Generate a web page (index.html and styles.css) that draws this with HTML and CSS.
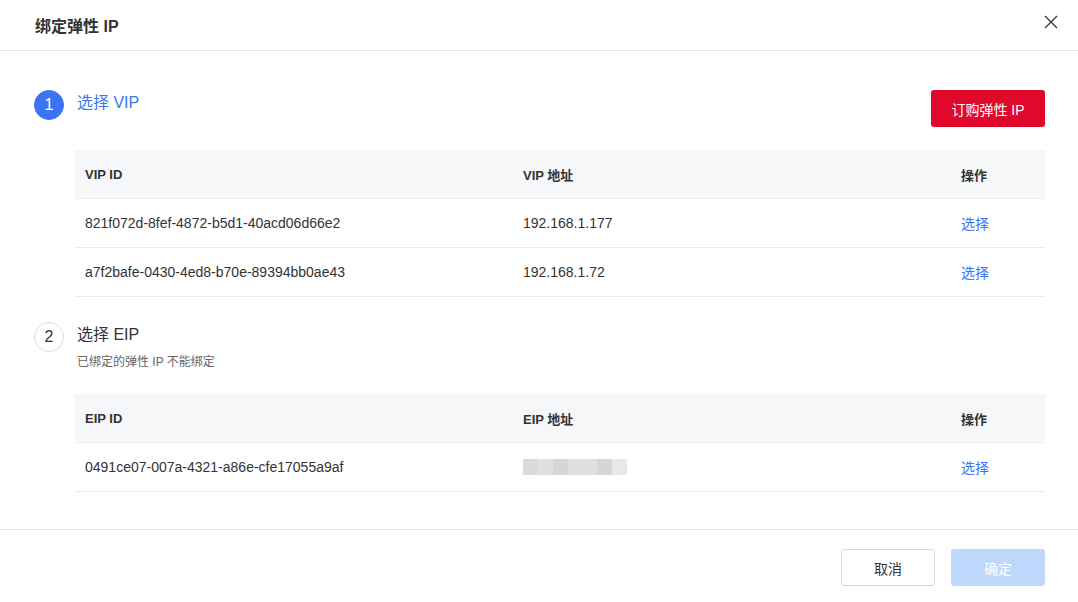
FILE: index.html
```html
<!DOCTYPE html>
<html lang="zh-CN">
<head>
  <meta charset="UTF-8" />
  <title>绑定弹性 IP</title>
  <link rel="stylesheet" href="styles.css">
</head>
<body>
  <div class="dialog">
    <div class="dialog-header">
      <span class="dialog-title">绑定弹性 IP</span>
      <span class="dialog-close">
        <svg width="14" height="14" viewBox="0 0 14 14"><path d="M1 1L13 13M13 1L1 13" stroke="#333" stroke-width="1.3" fill="none"/></svg>
      </span>
    </div>

    <div class="dialog-body">
      <!-- Step 1 -->
      <div class="step">
        <div class="step-head">
          <span class="step-num active">1</span>
          <div class="step-text">
            <div class="step-title active">选择 VIP</div>
          </div>
          <button class="btn btn-red">订购弹性 IP</button>
        </div>
        <table class="grid">
          <thead>
            <tr><th class="c1">VIP ID</th><th class="c2">VIP 地址</th><th class="c3">操作</th></tr>
          </thead>
          <tbody>
            <tr><td>821f072d-8fef-4872-b5d1-40acd06d66e2</td><td>192.168.1.177</td><td><a class="link">选择</a></td></tr>
            <tr><td>a7f2bafe-0430-4ed8-b70e-89394bb0ae43</td><td>192.168.1.72</td><td><a class="link">选择</a></td></tr>
          </tbody>
        </table>
      </div>

      <!-- Step 2 -->
      <div class="step step-two">
        <div class="step-head">
          <span class="step-num">2</span>
          <div class="step-text">
            <div class="step-title">选择 EIP</div>
            <div class="step-desc">已绑定的弹性 IP 不能绑定</div>
          </div>
        </div>
        <table class="grid">
          <thead>
            <tr><th class="c1">EIP ID</th><th class="c2">EIP 地址</th><th class="c3">操作</th></tr>
          </thead>
          <tbody>
            <tr>
              <td>0491ce07-007a-4321-a86e-cfe17055a9af</td>
              <td>
                <div class="blur">
                  <span class="b1"></span><span class="b2"></span><span class="b3"></span><span class="b2"></span><span class="b2"></span><span class="b3"></span><span class="b4"></span>
                </div>
              </td>
              <td><a class="link">选择</a></td>
            </tr>
          </tbody>
        </table>
      </div>
    </div>

    <div class="dialog-footer">
      <button class="btn btn-default">取消</button>
      <button class="btn btn-primary" disabled>确定</button>
    </div>
  </div>
</body>
</html>
```

FILE: styles.css
```css
body, html {
  margin: 0;
  padding: 0;
  width: 100%;
  height: 100%;
  background: #fff;
  color: #333;
  font-family: "Liberation Sans", "Noto Sans CJK SC", sans-serif;
  overflow: hidden;
}
.dialog {
  width: 1078px;
  height: 602px;
  display: flex;
  flex-direction: column;
}
.dialog-header {
  height: 51px;
  border-bottom: 1px solid #e5e5e5;
  display: flex;
  align-items: center;
  justify-content: space-between;
  padding: 0 20px 0 35px;
  box-sizing: border-box;
  flex-shrink: 0;
}
.dialog-title {
  font-size: 16px;
  font-weight: bold;
  color: #333;
}
.dialog-close {
  display: flex;
  margin-top: -7px;
}
.dialog-body {
  flex: 1;
  padding: 38px 33px 0 34px;
}
.step-head {
  display: flex;
  align-items: flex-start;
}
.step-num {
  width: 30px;
  height: 30px;
  border-radius: 50%;
  border: 1px solid #ddd;
  box-sizing: border-box;
  display: flex;
  align-items: center;
  justify-content: center;
  font-size: 16px;
  color: #333;
  flex-shrink: 0;
  margin-top: 1px;
}
.step-num.active {
  background: #3a74f3;
  border-color: #3a74f3;
  color: #fff;
}
.step-text {
  flex: 1;
  margin-left: 13px;
}
.step-title {
  font-size: 16px;
  line-height: 28px;
  color: #333;
}
.step-title.active {
  color: #3a74f3;
}
.step-desc {
  font-size: 12px;
  color: #666;
  margin-top: 3px;
}
.btn {
  font-family: inherit;
  font-size: 14px;
  height: 37px;
  border-radius: 3px;
  border: 1px solid transparent;
  padding: 0;
  cursor: pointer;
}
.btn-red {
  width: 114px;
  background: #e0082b;
  color: #fff;
  margin-top: 1px;
}
.btn-default {
  width: 94px;
  background: #fff;
  border-color: #d6d6d6;
  color: #333;
}
.btn-primary {
  width: 94px;
  background: #bed7fd;
  color: #fff;
}
.grid {
  margin: 23px 0 0 41px;
  width: 970px;
  border-collapse: collapse;
  table-layout: fixed;
  font-size: 14px;
}
.grid th {
  background: #f6f7f9;
  text-align: left;
  font-weight: bold;
  font-size: 13px;
  color: #333;
  height: 48px;
  padding: 0 10px;
  border-bottom: 1px solid #eceef2;
}
.grid td {
  height: 48px;
  padding: 0 10px;
  border-bottom: 1px solid #e9ebef;
  color: #333;
}
.grid .c1 { width: 418px; }
.grid .c2 { width: 418px; }
.link {
  color: #3a74f3;
}
.step-two {
  margin-top: 24px;
}
.step-two .grid {
  margin-top: 25px;
}
.blur {
  display: flex;
  width: 104px;
  height: 16px;
}
.blur span {
  flex: 1;
}
.blur .b1 { background: #dadada; }
.blur .b2 { background: #e0e0e0; }
.blur .b3 { background: #d6d6d6; }
.blur .b4 { background: #e8e8e8; }
.dialog-footer {
  border-top: 1px solid #e5e5e5;
  height: 73px;
  display: flex;
  justify-content: flex-end;
  align-items: flex-start;
  gap: 16px;
  padding: 19px 33px 0 0;
  box-sizing: border-box;
}
```
